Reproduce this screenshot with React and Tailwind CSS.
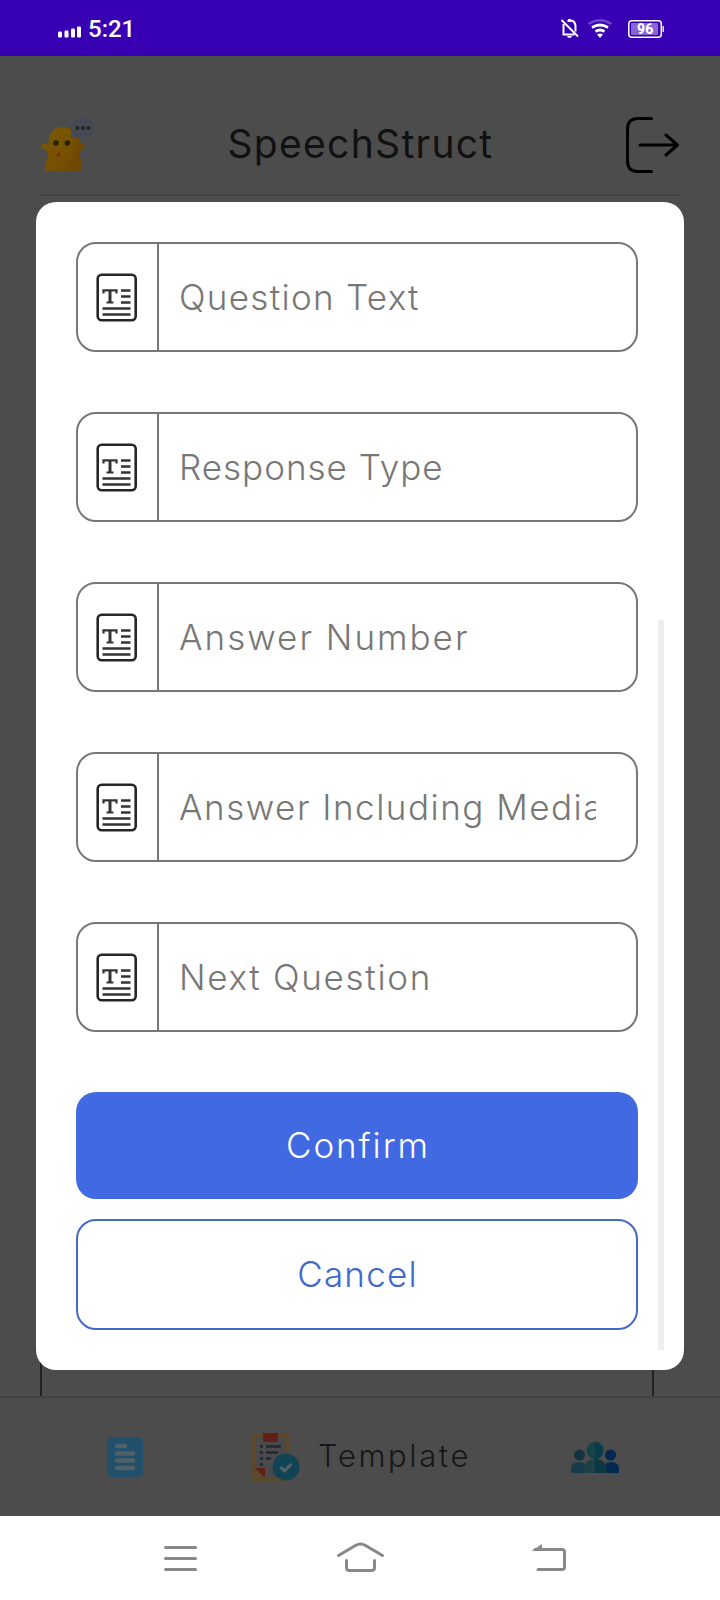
import React from "react";

const fields = [
  ["Question Text", "tracking-[1.3px]"],
  ["Response Type", "tracking-[1px]"],
  ["Answer Number", "tracking-[2px]"],
  ["Answer Including Media", "tracking-[1.5px]"],
  ["Next Question", "tracking-[1.7px]"],
];

function TextIcon() {
  return (
    <svg width="42" height="50" viewBox="0 0 42 50" fill="none" stroke="#333" className="mr-[1px] mt-[1px]">
      <rect x="1.700" y="1.700" width="38" height="45.600" rx="4" strokeWidth="2.600" stroke="#262626" />
      <path d="M7.500 20.500v-3.200h13v3.200M10.500 29.500h7" strokeWidth="2.200" />
      <path d="M14 17v12" strokeWidth="3" />
      <path d="M25 17.500h9.500M25 23.500h9.500M25 29.500h9.500M6.500 35.500h28M6.500 41.500h28" strokeWidth="2.500" />
    </svg>
  );
}

function Ghost() {
  return (
    <svg width="56" height="56" viewBox="40 117 56 56" className="mt-[3px]">
      <defs>
        <linearGradient id="ghost-body" x1="0" y1="0" x2="1" y2="1">
          <stop offset="0" stopColor="#7c5a02" />
          <stop offset="0.600" stopColor="#765000" />
          <stop offset="1" stopColor="#6e4400" />
        </linearGradient>
      </defs>
      <path d="M48.500 142c0-9 6-15 15-15s16 6 16 15v2.500l2-.8c2.500-1 4.500 2.300 2 4.300l-4.500 4c0 5 3 10 3 15-.5 4.500-4.500 5.500-7 2.500-2 3-6 3-8 0-2 3-6 3-8 0-2 3-6 3-8 0-3 3-6.500 1-6-3 .5-5 3.500-9 3-14l-5.500-4.500c-2.500-2-.5-5.300 2-4.300l4 1.300z" fill="url(#ghost-body)" />
      <path d="M68 127.500c8 2 11.500 8 11.500 15v2l2-.8c2.500-1 4.500 2.300 2 4.300l-4.500 4c0 5 3 10 3 15-.5 4-4 5-6 3-3-2-6-4-10-5 10-8 14-26 2-37.500z" fill="#6f4500" opacity="0.550" />
      <circle cx="56" cy="143" r="2.800" fill="#252117" /><circle cx="67.300" cy="143" r="2.800" fill="#252117" />
      <circle cx="58.500" cy="154.500" r="2" fill="#83290c" />
      <path d="M81 118h4.500a9.500 9.500 0 0 1 0 19H76l-6 1 2-4a9 9 0 0 1-.5-8c1.500-5 5-8 9.500-8z" fill="#464856" />
      <circle cx="77.300" cy="128" r="1.900" fill="#222" /><circle cx="83" cy="128" r="1.900" fill="#222" /><circle cx="88.500" cy="128" r="1.900" fill="#222" />
    </svg>
  );
}

export default function App() {
  return (
    <div className="relative flex h-[1600px] w-[720px] flex-col overflow-hidden bg-[#4c4c4c] font-['Inter',sans-serif]">
      <div className="flex h-14 shrink-0 items-center justify-between bg-[#3700b3] pl-[57px] pr-14 text-white">
        <div className="flex items-center gap-[6px]">
          <svg width="25" height="14" viewBox="0 0 25 14" fill="#fff" className="mt-[10px]">
            <rect x="1" y="5.500" width="4" height="6" rx="1.200" /><rect x="7.500" y="4.500" width="4" height="7" rx="1.200" />
            <rect x="14" y="2.500" width="4" height="9" rx="1.200" /><rect x="20" y="0.500" width="4" height="11" rx="1.200" />
          </svg>
          <span className="mt-[2px] font-['Roboto',sans-serif] text-2xl font-medium leading-7">5:21</span>
        </div>
        <svg width="106" height="24" viewBox="558 16 106 24" fill="none">
          <path d="M563.500 24v10.500h11M567.500 21.500c4-2.500 8 0 8 5v5" stroke="#fff" strokeWidth="2" />
          <path d="M569.500 19v3" stroke="#fff" strokeWidth="3" />
          <path d="M561.500 20l16.500 16.500" stroke="#fff" strokeWidth="2" />
          <path d="M567 36h5l-1 1.800h-3z" fill="#fff" />
          <path d="M588.500 24q11.500-7.500 23 0" stroke="#6b42c8" strokeWidth="2.500" />
          <path d="M592 27.500q8-5 16 0M595.500 31.500q4.500-3 9 0" stroke="#fff" strokeWidth="2.800" />
          <path d="M597 34.500q3-2 6 0l-3 3.500z" fill="#fff" />
          <rect x="628.800" y="20.800" width="32.500" height="16.500" rx="3" stroke="#fff" strokeWidth="1.500" />
          <rect x="631" y="23" width="27" height="12" rx="1" fill="#8a63d5" />
          <path d="M663.200 26v6" stroke="#fff" strokeWidth="1.300" />
          <text x="645.200" y="34" textAnchor="middle" fill="#fff" fontFamily="Roboto" fontWeight="800" fontSize="14">96</text>
        </svg>
      </div>

      <header className="mx-10 flex h-[140px] shrink-0 items-center justify-between border-b-2 border-[#424242] pt-9">
        <Ghost />
        <h1 className="mt-px whitespace-nowrap pl-[1px] text-[39px] font-normal leading-none tracking-[1.300px] text-[#111]">SpeechStruct</h1>
        <svg width="56" height="60" viewBox="624 115 56 60" fill="none" stroke="#000" strokeWidth="3" strokeLinecap="round" strokeLinejoin="round" className="mt-[4px]">
          <path d="M651.500 118.500H638q-10.500 0-10.500 10.500v32q0 10.500 10.500 10.500h13.500M640 145h37M666 135l11.500 10-11.500 10" />
        </svg>
      </header>

      <main className="ml-10 mt-10 h-[1160px] w-[614px] shrink-0 border-x-2 border-[#222]" />

      <footer className="flex h-[120px] shrink-0 items-center border-t-2 border-[#404040]">
        <svg width="36" height="40" viewBox="0 0 36 40" className="ml-[107px]">
          <rect width="36" height="40" rx="5" fill="#22506a" />
          <path d="M10 9h8M10 16.500h16M10 23.500h16M10 31h16" stroke="#506068" strokeWidth="4.500" strokeLinecap="round" />
        </svg>
        <svg width="49" height="48" viewBox="251 1433 49 48" className="ml-[108px]">
          <rect x="251" y="1434" width="39" height="47" rx="3" fill="#5c492c" />
          <path d="M255 1438h31v40h-21l-10-10z" fill="#4a4a4d" />
          <path d="M255 1468h10v10z" fill="#602017" />
          <path d="M263 1433h15v7q0 2-2 2h-11q-2 0-2-2z" fill="#602017" />
          <path d="M260 1446.500h3M266 1446.500h15M260 1452.500h3M266 1452.500h12M260 1458.500h3M266 1458.500h5M260 1464.500h3" stroke="#20282b" strokeWidth="2.500" />
          <circle cx="286" cy="1467" r="13.500" fill="#104454" />
          <path d="M280.500 1467l4 4 7-7" stroke="#56656a" strokeWidth="3" fill="none" />
        </svg>
        <span className="mb-[3px] ml-[18px] w-[151px] whitespace-nowrap text-[31px] font-light leading-none tracking-[2.600px] text-[#171717]">Template</span>
        <svg width="48" height="32" viewBox="571 1441 48 32" className="ml-[102px]">
          <circle cx="579.500" cy="1455" r="5.500" fill="#123442" /><path d="M571 1473v-4q0-7 8-7 9 0 9 11z" fill="#153a4a" />
          <circle cx="610.500" cy="1455" r="5.500" fill="#002850" /><path d="M619 1473v-4q0-7-8-7-9 0-9 11z" fill="#002850" />
          <path d="M583 1473q0-14 12-14t12 14z" fill="#1e4148" /><path d="M595 1459q12 0 12 14h-12z" fill="#0b3840" />
          <circle cx="595" cy="1450.500" r="8.500" fill="#16434a" /><path d="M595 1442a8.500 8.500 0 0 1 0 17z" fill="#073d48" />
        </svg>
      </footer>

      <nav className="flex h-[84px] shrink-0 bg-white">
        <svg width="720" height="84" viewBox="0 1516 720 84" fill="none" stroke="#888" strokeWidth="3" strokeLinecap="round" strokeLinejoin="round">
          <path d="M165.500 1547.500h30M165.500 1558.500h30M165.500 1569.500h30" />
          <path d="M338.500 1555.500l17-10q5-3 10 0l17 10M346.500 1560.500v7q0 3 3 3h22q3 0 3-3v-7" />
          <path d="M538 1569.500h24q2.500 0 2.500-2.500v-15q0-2.500-2.500-2.500h-27" />
          <path d="M531.500 1551l10.500-7v6z" fill="#888" stroke="none" />
        </svg>
      </nav>

      <div role="dialog" className="absolute left-9 top-[202px] flex h-[1168px] w-[648px] rounded-[20px] bg-white pb-5 pl-10 pt-10">
        <form className="flex w-[562px] flex-col gap-[60px]">
          {fields.map(([label, tracking]) => (
            <label key={label} className="flex h-[110px] shrink-0 rounded-[20px] border-2 border-[#777]">
              <span className="flex w-[81px] shrink-0 items-center justify-center border-r-2 border-[#777]"><TextIcon /></span>
              <span className={`ml-5 flex w-[417px] items-center overflow-hidden whitespace-nowrap text-[35px] font-light text-[#777] ${tracking}`}>{label}</span>
            </label>
          ))}
          <div className="flex flex-col gap-5 text-[35px] font-light">
            <button type="button" className="h-[107px] rounded-[20px] bg-[#4169e1] pl-[2px] tracking-[1.900px] text-white">Confirm</button>
            <button type="button" className="h-[111px] rounded-[20px] border-2 border-[#4568c4] pl-[1px] tracking-[1.200px] text-[#4169cc]">Cancel</button>
          </div>
        </form>
        <div className="ml-5 mt-auto h-[730px] w-[6px] bg-[#eee]" />
      </div>
    </div>
  );
}
